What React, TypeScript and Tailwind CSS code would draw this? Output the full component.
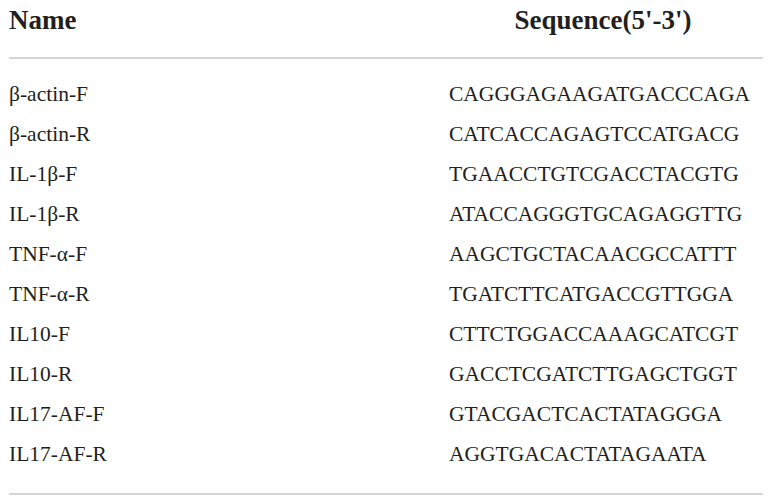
const rows: [string, string][] = [
  ['β-actin-F', 'CAGGGAGAAGATGACCCAGA'],
  ['β-actin-R', 'CATCACCAGAGTCCATGACG'],
  ['IL-1β-F', 'TGAACCTGTCGACCTACGTG'],
  ['IL-1β-R', 'ATACCAGGGTGCAGAGGTTG'],
  ['TNF-α-F', 'AAGCTGCTACAACGCCATTT'],
  ['TNF-α-R', 'TGATCTTCATGACCGTTGGA'],
  ['IL10-F', 'CTTCTGGACCAAAGCATCGT'],
  ['IL10-R', 'GACCTCGATCTTGAGCTGGT'],
  ['IL17-AF-F', 'GTACGACTCACTATAGGGA'],
  ['IL17-AF-R', 'AGGTGACACTATAGAATA'],
];

export default function App() {
  return (
    <div className="w-[772px] h-[504px] bg-white text-[#231f20] font-['Liberation_Serif',serif]">
      <div className="ml-[9px] w-[754px]">
        {/* header */}
        <div className="grid grid-cols-[440px_308px] pt-[5px] h-[57px] text-[27px] font-bold leading-[30px]">
          <div>Name</div>
          <div className="text-center">Sequence(5'-3')</div>
        </div>
        <div className="h-[2px] bg-[#d6d6d6]" />

        {/* rows */}
        <div className="pt-[15px] pb-[19px] text-[21.5px] leading-[40px]">
          {rows.map(([name, seq]) => (
            <div key={name} className="grid grid-cols-[440px_308px]">
              <div>{name}</div>
              <div>{seq}</div>
            </div>
          ))}
        </div>
        <div className="h-[2px] bg-[#d6d6d6]" />
      </div>
    </div>
  );
}
